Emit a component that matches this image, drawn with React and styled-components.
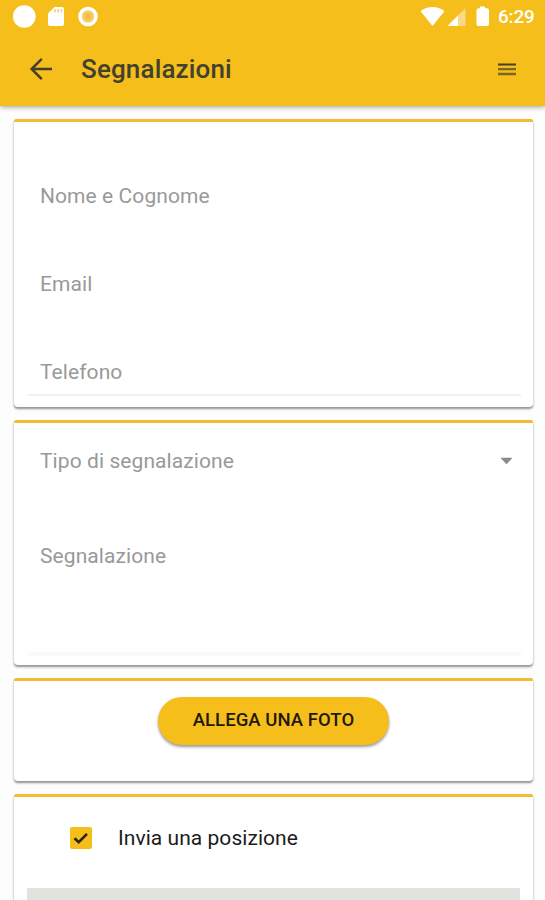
import React, { useState } from 'react';
import styled, { createGlobalStyle } from 'styled-components';

const GlobalStyle = createGlobalStyle`
  body {
    margin: 0;
    background-color: #fdfdfd;
    font-family: Roboto, sans-serif;
    overflow: hidden;
  }
`;

const Container = styled.div`
  display: flex;
  flex-direction: column;
  width: 545px;
  height: 900px;
  overflow: hidden;
  background-color: #fdfdfd;
`;

const Header = styled.header`
  flex: none;
  height: 106px;
  background-color: #f5be1a;
  box-shadow: 0 1px 5px rgba(0, 0, 0, 0.38);
`;

const StatusBar = styled.div`
  display: flex;
  justify-content: space-between;
  height: 33px;
`;

const StatusIcons = styled.svg`
  display: block;
  height: 33px;
`;

const StatusRight = styled.div`
  display: flex;
  padding-right: 10px;
`;

const Clock = styled.span`
  font-size: 19px;
  font-weight: 500;
  line-height: 34px;
  letter-spacing: -0.2px;
  color: #fff;
  width: 37px;
  white-space: nowrap;
`;

const Toolbar = styled.div`
  display: flex;
  align-items: center;
  height: 72px;
  padding: 0 29px 0 29px;
`;

const IconButton = styled.button`
  display: flex;
  padding: 0;
  border: none;
  background: none;
  cursor: pointer;
`;

const Title = styled.h1`
  flex: 1;
  margin: 0 0 0 28px;
  font-size: 26px;
  font-weight: 500;
  letter-spacing: 0.15px;
  line-height: 72px;
  color: #42412f;
`;

const Content = styled.main`
  display: flex;
  flex-direction: column;
  gap: 13px;
  padding: 13px 12px 0 14px;
`;

const Card = styled.section`
  flex: none;
  height: ${({ $height }) => $height}px;
  box-sizing: border-box;
  padding: 0 12px 0 14px;
  border-top: 3px solid #f0bd35;
  border-radius: 2px 2px 4px 4px;
  background-color: #fff;
  box-shadow: 0 2px 2px rgba(0, 0, 0, 0.32), 0 2px 3px rgba(0, 0, 0, 0.14);
`;

const Field = styled.div`
  display: flex;
  align-items: center;
  justify-content: space-between;
  height: ${({ $height }) => $height}px;
  margin-top: ${({ $top }) => $top || 0}px;
  padding: 0 8px 0 12px;
  font-size: 21px;
  letter-spacing: 0.08px;
  color: #999;
`;

const Divider = styled.div`
  height: ${({ $thick }) => $thick || 2}px;
  margin-top: ${({ $top }) => $top}px;
  background-color: ${({ $color }) => $color || '#f1f1f1'};
`;

const PhotoButton = styled.button`
  display: block;
  width: 231px;
  height: 48px;
  margin: 16px 0 0 130px;
  padding: 0 0 2px;
  border: none;
  border-radius: 24px;
  background-color: #f5be1a;
  box-shadow: 0 2px 3px rgba(0, 0, 0, 0.4);
  font-family: inherit;
  font-size: 18.5px;
  font-weight: 500;
  letter-spacing: 0.05px;
  color: #1f1a08;
  cursor: pointer;
`;

const PositionRow = styled.div`
  display: flex;
  align-items: center;
  gap: 26px;
  height: 81px;
  padding-left: 42px;
  font-size: 21px;
  letter-spacing: 0.05px;
  color: #1c1c1c;
`;

const Checkbox = styled.button`
  display: flex;
  align-items: center;
  justify-content: center;
  width: 22px;
  height: 22px;
  padding: 0;
  border: none;
  border-radius: 2px;
  background-color: ${({ $checked }) => ($checked ? '#f5be1a' : '#ccc')};
  cursor: pointer;
`;

const MapArea = styled.div`
  height: 300px;
  margin: 10px 1px 0 -1px;
  background-color: #e2e2de;
`;

const App = () => {
  const [sendPosition, setSendPosition] = useState(true);

  return (
    <Container>
      <GlobalStyle />
      <Header>
        <StatusBar>
          <StatusIcons width="110" viewBox="0 0 110 33">
            <circle cx="24.3" cy="16.5" r="11.3" fill="#fff" />
            <path
              d="M54.5 7H62q2 0 2 2v15q0 2-2 2H50q-2 0-2-2V13.500z"
              fill="#fff"
            />
            <path d="M55 9v3.500M58.200 9v3.500M61.400 9v3.500" stroke="#f5d580" strokeWidth="1.800" />
            <circle cx="88" cy="16.5" r="8" fill="#f8ce67" stroke="#fff" strokeWidth="3.6" />
            <circle cx="88" cy="16.5" r="3.4" fill="#f5bd45" />
          </StatusIcons>
          <StatusRight>
            <StatusIcons width="78" viewBox="420 0 78 33">
              <path d="M432.500 26L420.600 11.200Q426 7 432.500 7t11.900 4.200z" fill="#fff" />
              <path d="M465.500 8v18H447.500z" fill="#f9d985" />
              <path d="M458 15.500V26H447.500z" fill="#fff" />
              <path
                d="M480 6.500h5V8.300h2q2 0 2 2V24q0 2-2 2h-8.500q-2 0-2-2V10.300q0-2 2-2H480z"
                fill="#fff"
              />
            </StatusIcons>
            <Clock>6:29</Clock>
          </StatusRight>
        </StatusBar>
        <Toolbar>
          <IconButton aria-label="Indietro">
            <svg width="24" height="24" viewBox="0 0 24 24" fill="none" stroke="#42412f" strokeWidth="2.500">
              <path d="M23 12H3M12.800 1.800L2.600 12l10.200 10.200" />
            </svg>
          </IconButton>
          <Title>Segnalazioni</Title>
          <IconButton aria-label="Menu">
            <svg width="18" height="14" viewBox="0 0 18 14">
              <path d="M0 2.500h18" stroke="#42412f" strokeWidth="2" />
              <path d="M0 7.200h18M0 12h18" stroke="#7a681f" strokeWidth="2.300" />
            </svg>
          </IconButton>
        </Toolbar>
      </Header>
      <Content>
        <Card $height={288}>
          <Field $top={30} $height={88}>Nome e Cognome</Field>
          <Field $height={87}>Email</Field>
          <Field $top={20} $height={50}>Telefono</Field>
          <Divider $top={-3} />
        </Card>
        <Card $height={245}>
          <Field $height={76}>
            Tipo di segnalazione
            <svg width="13" height="8" viewBox="0 0 14 8">
              <path d="M0.500 0.500h13L7 7.500z" fill="#8b8b8b" />
            </svg>
          </Field>
          <Field $top={26} $height={62}>Segnalazione</Field>
          <Divider $top={65} $thick={4} $color="#fafafa" />
        </Card>
        <Card $height={103}>
          <PhotoButton>ALLEGA UNA FOTO</PhotoButton>
        </Card>
        <Card $height={400}>
          <PositionRow>
            <Checkbox
              role="checkbox"
              aria-checked={sendPosition}
              $checked={sendPosition}
              onClick={() => setSendPosition(!sendPosition)}
            >
              {sendPosition && (
                <svg width="16" height="14" viewBox="0 0 16 14" fill="none" stroke="#2b2308" strokeWidth="2.600">
                  <path d="M1.500 7.200l4.200 4L14 2.800" />
                </svg>
              )}
            </Checkbox>
            Invia una posizione
          </PositionRow>
          <MapArea />
        </Card>
      </Content>
    </Container>
  );
};

export default App;
